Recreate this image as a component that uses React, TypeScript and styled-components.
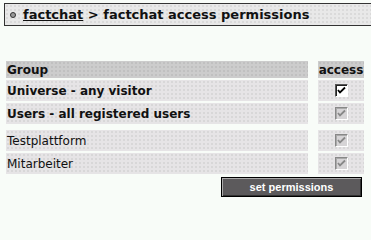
import React from 'react';
import styled, { createGlobalStyle } from 'styled-components';

const GlobalStyle = createGlobalStyle`
  body {
    margin: 0;
    background: #f8fcf8;
    font-family: 'DejaVu Sans', Verdana, sans-serif;
    color: #111;
  }
`;

const dots = `
  background-image: radial-gradient(circle, rgba(0, 0, 0, 0.09) 0.6px, transparent 0.9px);
  background-size: 4px 4px;
`;

const Page = styled.div`
  width: 371px;
  height: 200px;
  overflow: hidden;
  padding-top: 3px;
  box-sizing: border-box;
`;

const TitleBar = styled.div`
  margin-left: 4px;
  height: 21px;
  border: 1px solid #333;
  border-right: none;
  background-color: #e8e8e8;
  ${dots}
  display: flex;
  align-items: center;
  gap: 7px;
  padding-left: 5px;
  font-size: 13px;
  font-weight: bold;
  white-space: nowrap;
`;

const Bullet = styled.span`
  width: 4px;
  height: 4px;
  border-radius: 50%;
  border: 1px solid #333;
  background: #999;
  flex: none;
`;

const Crumb = styled.a`
  color: #111;
  text-decoration: underline;
`;

const Table = styled.div`
  margin: 35px 0 0 6px;
  display: grid;
  grid-template-columns: 302px 46px;
  column-gap: 10px;
  row-gap: 2px;
`;

const Cell = styled.div<{ $head?: boolean; $bold?: boolean; $center?: boolean }>`
  height: ${(p) => (p.$head ? '17px' : '21px')};
  background-color: ${(p) => (p.$head ? '#cccccc' : '#e6e4e6')};
  ${dots}
  display: flex;
  align-items: center;
  justify-content: ${(p) => (p.$center ? 'center' : 'flex-start')};
  padding-left: ${(p) => (p.$center ? '0' : '1px')};
  font-size: 12px;
  font-weight: ${(p) => (p.$bold ? 'bold' : 'normal')};
  white-space: nowrap;
`;

const Spacer = styled.div`
  grid-column: 1 / -1;
  height: 2px;
`;

const Box = styled.span<{ $disabled?: boolean }>`
  width: 11px;
  height: 11px;
  border: 1px solid;
  border-color: ${(p) => (p.$disabled ? '#888 #fff #fff #888' : '#555 #fff #fff #555')};
  background: ${(p) => (p.$disabled ? '#d6d4d6' : '#fff')};
  box-shadow: inset 1px 1px 0 ${(p) => (p.$disabled ? '#aaa' : '#222')};
  display: flex;
  align-items: center;
  justify-content: center;
`;

const ButtonRow = styled.div`
  display: flex;
  justify-content: flex-end;
  padding: 3px 9px 0 0;
`;

const Button = styled.button`
  width: 141px;
  height: 20px;
  border: 1px solid #000;
  box-shadow: inset 1px 1px 0 #aaa, inset -1px -1px 0 #333;
  background: #5c5a5c;
  color: #fff;
  font-family: 'Liberation Sans', Arial, sans-serif;
  font-size: 11px;
  font-weight: bold;
  padding: 0;
  cursor: pointer;
`;

const Check = ({ disabled }: { disabled?: boolean }) => (
  <Box $disabled={disabled}>
    <svg width="9" height="9" viewBox="0 0 9 9">
      <path
        d="M1 4 L3 6.5 L8 1.5"
        fill="none"
        stroke={disabled ? '#888' : '#000'}
        strokeWidth="1.8"
      />
    </svg>
  </Box>
);

const rows = [
  { name: 'Universe - any visitor', bold: true, disabled: false },
  { name: 'Users - all registered users', bold: true, disabled: true },
];
const groups = [
  { name: 'Testplattform', bold: false, disabled: true },
  { name: 'Mitarbeiter', bold: false, disabled: true },
];

const App = () => {
  return (
    <>
      <GlobalStyle />
      <Page>
        <TitleBar>
          <Bullet />
          <span>
            <Crumb>factchat</Crumb> &gt; factchat access permissions
          </span>
        </TitleBar>
        <Table>
          <Cell $head $bold>
            Group
          </Cell>
          <Cell $head $bold $center>
            access
          </Cell>
          {rows.map((r) => (
            <React.Fragment key={r.name}>
              <Cell $bold={r.bold}>{r.name}</Cell>
              <Cell $center>
                <Check disabled={r.disabled} />
              </Cell>
            </React.Fragment>
          ))}
          <Spacer />
          {groups.map((r) => (
            <React.Fragment key={r.name}>
              <Cell $bold={r.bold}>{r.name}</Cell>
              <Cell $center>
                <Check disabled={r.disabled} />
              </Cell>
            </React.Fragment>
          ))}
        </Table>
        <ButtonRow>
          <Button>set permissions</Button>
        </ButtonRow>
      </Page>
    </>
  );
};

export default App;
